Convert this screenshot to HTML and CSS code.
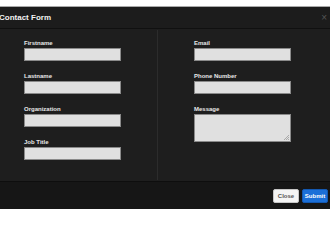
FILE: index.html
```html
<!DOCTYPE html>
<html>
<head>
<meta charset="utf-8">
<link rel="stylesheet" href="styles.css">
</head>
<body>
<div class="modal">
  <div class="modal-header">
    <span class="title">Contact Form</span>
    <span class="close-x">×</span>
  </div>
  <div class="modal-body">
    <div class="col col-left">
      <div class="field"><label>Firstname</label><input type="text"></div>
      <div class="field"><label>Lastname</label><input type="text"></div>
      <div class="field"><label>Organization</label><input type="text"></div>
      <div class="field"><label>Job Title</label><input type="text"></div>
    </div>
    <div class="col col-right">
      <div class="field"><label>Email</label><input type="text"></div>
      <div class="field"><label>Phone Number</label><input type="text"></div>
      <div class="field"><label>Message</label>
        <div class="ta-wrap">
          <textarea></textarea>
          <svg class="grip" width="5" height="5" viewBox="0 0 5 5"><path d="M5 0 L0 5 M5 2 L2 5 M5 4 L4 5" stroke="#9a9a9a" stroke-width="0.8"/></svg>
        </div>
      </div>
    </div>
  </div>
  <div class="modal-footer">
    <button class="btn btn-close">Close</button>
    <button class="btn btn-submit">Submit</button>
  </div>
</div>
</body>
</html>
```
FILE: styles.css
```css
html, body {
  margin: 0;
  padding: 0;
  background: #ffffff;
  overflow: hidden;
}
body {
  font-family: "Liberation Sans", Arial, sans-serif;
}
.modal {
  margin: 6px 0 0 -8px;
  width: 342px;
  background: #1e1e1e;
  border-top: 1px solid #a9a9a9;
}
.modal-header {
  height: 21px;
  display: flex;
  align-items: center;
  justify-content: space-between;
  padding: 0 7px 0 7px;
  background: #1c1c1c;
  border-bottom: 1px solid #101010;
}
.title {
  font-size: 8px;
  font-weight: bold;
  color: #f2f2f2;
  line-height: 21px;
}
.close-x {
  font-size: 10px;
  line-height: 10px;
  color: #555555;
}
.modal-body {
  display: flex;
  height: 152px;
  box-sizing: border-box;
}
.col {
  display: flex;
  flex-direction: column;
  gap: 11px;
  padding-top: 10px;
  box-sizing: border-box;
}
.col-left {
  width: 166px;
  padding-left: 32px;
  border-right: 1px solid #2c2c2c;
  margin: 1px 0;
  padding-top: 9px;
}
.col-right {
  padding-left: 36px;
}
.field {
  display: flex;
  flex-direction: column;
}
.field label {
  font-size: 6px;
  line-height: 8px;
  font-weight: bold;
  color: #e8e8e8;
  margin-bottom: 1px;
}
.field input,
.field textarea {
  box-sizing: border-box;
  width: 97px;
  height: 13px;
  margin: 0;
  padding: 0 2px;
  background: #e0e0e0;
  border: 1px solid #8a8a8a;
  border-radius: 0;
  font-family: "Liberation Sans", Arial, sans-serif;
  font-size: 6px;
  outline: none;
}
.ta-wrap {
  position: relative;
  width: 97px;
  height: 28px;
}
.field textarea {
  display: block;
  height: 28px;
  resize: none;
}
.grip {
  position: absolute;
  right: 2px;
  bottom: 2px;
}
.modal-footer {
  height: 27px;
  display: flex;
  align-items: center;
  justify-content: flex-end;
  gap: 3px;
  padding-right: 6px;
  background: #161616;
  border-top: 1px solid #0e0e0e;
}
.btn {
  height: 14px;
  width: 26px;
  padding: 0;
  font-family: "Liberation Sans", Arial, sans-serif;
  font-size: 6px;
  font-weight: bold;
  border-radius: 2px;
  cursor: pointer;
}
.btn-close {
  background: #f4f4f4;
  color: #555555;
  border: 1px solid #c6c6c6;
}
.btn-submit {
  background: #1b6fd8;
  color: #ffffff;
  border: 1px solid #1458b0;
}
```
